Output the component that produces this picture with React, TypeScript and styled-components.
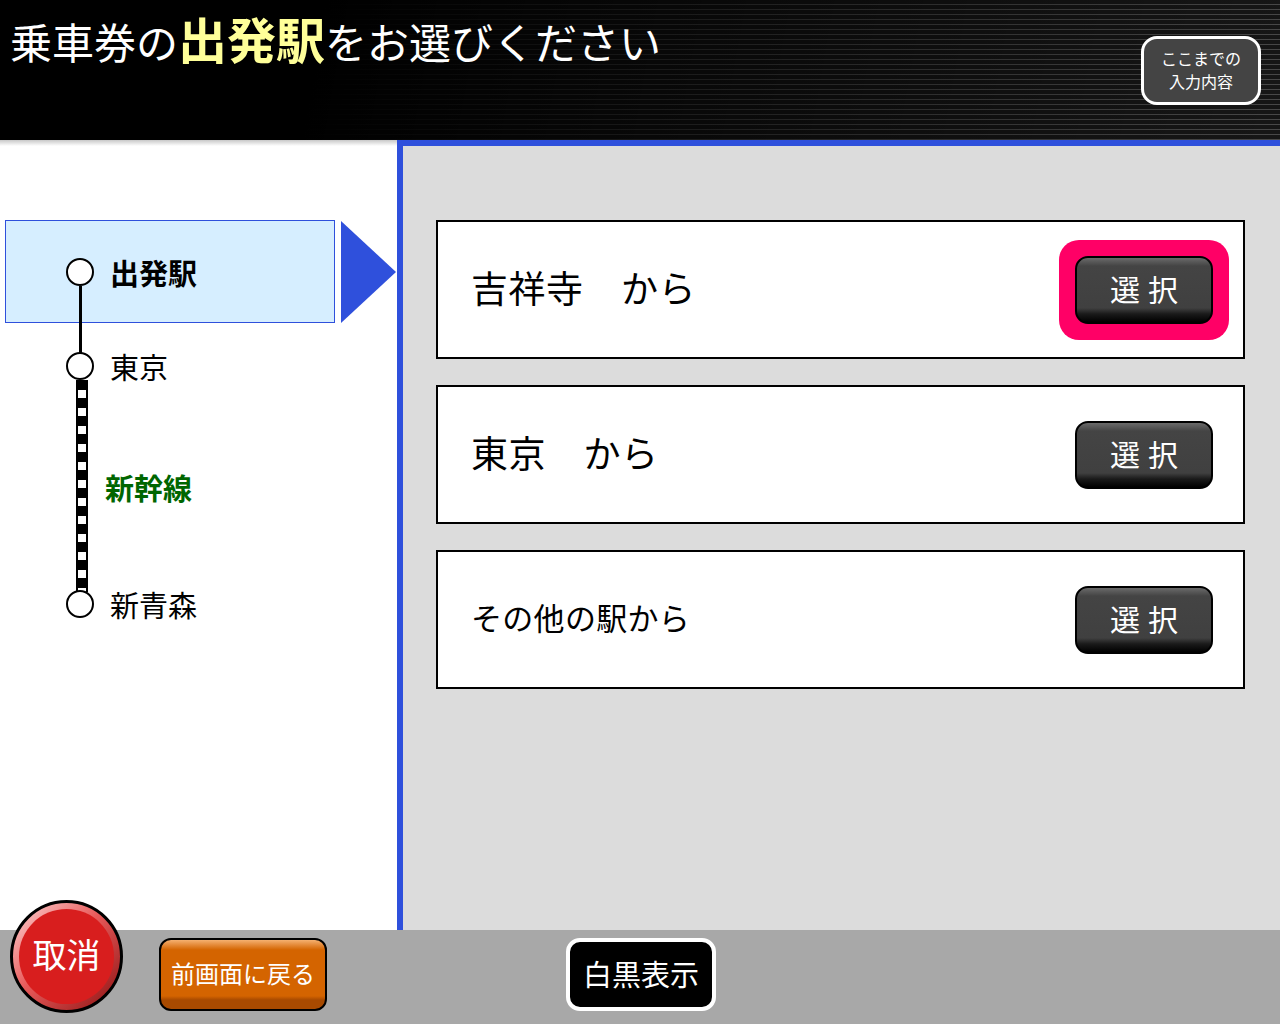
import styled, { createGlobalStyle } from "styled-components";

const GlobalStyle = createGlobalStyle`
  html, body {
    margin: 0;
    padding: 0;
    background: #000;
  }
  body {
    font-family: "Noto Sans CJK JP", "Noto Sans", sans-serif;
  }
  * {
    box-sizing: border-box;
  }
`;

const Screen = styled.div`
  width: 1280px;
  height: 1024px;
  display: flex;
  flex-direction: column;
  overflow: hidden;
`;

const Header = styled.header`
  height: 140px;
  display: flex;
  justify-content: space-between;
  align-items: flex-start;
  padding: 10px 19px 0 10px;
  background:
    linear-gradient(100deg, #000 25%, rgba(0, 0, 0, 0.15) 100%),
    repeating-linear-gradient(to bottom, #1a1a1a 0 4px, #555 4px 5px);
`;

const Title = styled.h1`
  margin: 0;
  font-size: 42px;
  font-weight: 400;
  line-height: 56px;
  color: #fff;
  white-space: nowrap;
`;

const Accent = styled.span`
  font-size: 49px;
  font-weight: 700;
  color: #ffff99;
`;

const HistoryButton = styled.button`
  margin-top: 26px;
  width: 120px;
  height: 69px;
  border: 3px solid #fff;
  border-radius: 16px;
  background: #444;
  color: #fff;
  font-family: inherit;
  font-size: 16px;
  line-height: 23px;
  padding: 0 0 2px;
`;

const Main = styled.main`
  flex: 1;
  display: flex;
  min-height: 0;
`;

const RoutePanel = styled.section`
  width: 397px;
  background: linear-gradient(to bottom, #c8c8c8 0, #fff 6px);
  padding-top: 80px;
  display: flex;
  flex-direction: column;
`;

const SelectedRow = styled.div`
  display: flex;
  align-items: flex-start;
`;

const Highlight = styled.div`
  margin-left: 5px;
  width: 330px;
  height: 103px;
  background: #d6eeff;
  border: 1px solid #2f50dc;
  display: flex;
  align-items: center;
  padding-left: 60px;
`;

const Arrow = styled.div`
  margin-left: 6px;
  margin-top: 1px;
  width: 0;
  height: 0;
  border-top: 51px solid transparent;
  border-bottom: 51px solid transparent;
  border-left: 55px solid #2f50dc;
`;

const Stop = styled.div<{ $gap?: number }>`
  display: flex;
  align-items: center;
  height: 28px;
  margin-top: ${(p) => p.$gap ?? 0}px;
  margin-left: ${(p) => (p.$gap === undefined ? 0 : 66)}px;
`;

const Dot = styled.span<{ $line?: "solid" | "dashed"; $len?: number }>`
  position: relative;
  width: 28px;
  height: 28px;
  border-radius: 50%;
  border: 2px solid #000;
  background: #fff;
  flex-shrink: 0;
  z-index: 1;

  &::after {
    content: "";
    display: ${(p) => (p.$line ? "block" : "none")};
    position: absolute;
    top: 26px;
    left: 50%;
    height: ${(p) => p.$len ?? 0}px;
    ${(p) =>
      p.$line === "dashed"
        ? `
      width: 8px;
      margin-left: -4px;
      border-left: 2px solid #000;
      border-right: 2px solid #000;
      background: repeating-linear-gradient(to bottom, #000 0 10px, #fff 10px 18px);
    `
        : `
      width: 3px;
      margin-left: -1.5px;
      background: #000;
    `}
  }
`;

const StopName = styled.span<{ $bold?: boolean }>`
  margin-left: 16px;
  font-size: 29px;
  font-weight: ${(p) => (p.$bold ? 700 : 400)};
  color: #000;
  line-height: 28px;
`;

const LineName = styled.div`
  margin-top: 92px;
  margin-left: 105px;
  height: 30px;
  font-size: 29px;
  font-weight: 700;
  line-height: 30px;
  color: #006600;
`;

const ChoicePanel = styled.section`
  flex: 1;
  background: #dcdcdc;
  border-left: 6px solid #2f50dc;
  border-top: 6px solid #2f50dc;
  padding: 74px 35px 0 33px;
  display: flex;
  flex-direction: column;
  gap: 26px;
`;

const Card = styled.div`
  height: 139px;
  background: #fff;
  border: 2px solid #000;
  display: flex;
  align-items: center;
  justify-content: space-between;
  padding: 0 14px 0 33px;
`;

const CardLabel = styled.span<{ $small?: boolean }>`
  font-size: ${(p) => (p.$small ? 31 : 37)}px;
  color: #000;
  white-space: pre;
  padding-bottom: 6px;
  letter-spacing: ${(p) => (p.$small ? 0.3 : 0.5)}px;
`;

const SelectWrap = styled.div<{ $active?: boolean }>`
  padding: 16px;
  border-radius: 20px;
  background: ${(p) => (p.$active ? "#ff0066" : "transparent")};
`;

const SelectButton = styled.button`
  display: block;
  width: 138px;
  height: 68px;
  border: 2px solid #000;
  border-radius: 13px;
  background: linear-gradient(
    to bottom,
    #6a6a6a 0,
    #444 8px,
    #404040 50px,
    #1a1a1a 56px,
    #000 100%
  );
  color: #fff;
  font-family: inherit;
  font-size: 30px;
  letter-spacing: 8px;
  padding: 0 0 4px 8px;
`;

const BottomBar = styled.footer`
  height: 94px;
  background: #a8a8a8;
  display: flex;
  align-items: flex-start;
  padding-left: 10px;
`;

const CancelButton = styled.button`
  margin-top: -30px;
  width: 113px;
  height: 113px;
  border-radius: 50%;
  border: 3px solid #000;
  padding: 6px;
  background: linear-gradient(135deg, #ffd6d6 0%, #e85a5a 45%, #8c1010 100%);
  display: flex;
  font-family: inherit;
`;

const CancelFace = styled.span`
  flex: 1;
  border-radius: 50%;
  background: #d81e1e;
  color: #fff;
  font-size: 34px;
  display: flex;
  align-items: center;
  justify-content: center;
  padding-bottom: 6px;
`;

const BackButton = styled.button`
  margin-top: 8px;
  margin-left: 36px;
  width: 168px;
  height: 73px;
  border: 2px solid #000;
  border-radius: 12px;
  background: linear-gradient(
    to bottom,
    #f5b070 0,
    #d46400 10px,
    #d46400 56px,
    #a84a00 60px,
    #a84a00 100%
  );
  color: #fff;
  font-family: inherit;
  font-size: 24px;
  padding: 0 0 4px;
  white-space: nowrap;
`;

const MonoButton = styled.button`
  margin-top: 8px;
  margin-left: 239px;
  width: 150px;
  height: 73px;
  border: 4px solid #fff;
  border-radius: 14px;
  background: #000;
  color: #fff;
  font-family: inherit;
  font-size: 29px;
  padding: 0 0 4px;
  white-space: nowrap;
`;

const choices = [
  { label: "吉祥寺　から", active: true },
  { label: "東京　から" },
  { label: "その他の駅から", small: true },
];

export default function App() {
  return (
    <Screen>
      <GlobalStyle />
      <Header>
        <Title>
          乗車券の<Accent>出発駅</Accent>をお選びください
        </Title>
        <HistoryButton>
          ここまでの
          <br />
          入力内容
        </HistoryButton>
      </Header>
      <Main>
        <RoutePanel>
          <SelectedRow>
            <Highlight>
              <Stop>
                <Dot $line="solid" $len={67} />
                <StopName $bold>出発駅</StopName>
              </Stop>
            </Highlight>
            <Arrow />
          </SelectedRow>
          <Stop $gap={29}>
            <Dot $line="dashed" $len={212} />
            <StopName>東京</StopName>
          </Stop>
          <LineName>新幹線</LineName>
          <Stop $gap={88}>
            <Dot />
            <StopName>新青森</StopName>
          </Stop>
        </RoutePanel>
        <ChoicePanel>
          {choices.map((c) => (
            <Card key={c.label}>
              <CardLabel $small={c.small}>{c.label}</CardLabel>
              <SelectWrap $active={c.active}>
                <SelectButton>選択</SelectButton>
              </SelectWrap>
            </Card>
          ))}
        </ChoicePanel>
      </Main>
      <BottomBar>
        <CancelButton>
          <CancelFace>取消</CancelFace>
        </CancelButton>
        <BackButton>前画面に戻る</BackButton>
        <MonoButton>白黒表示</MonoButton>
      </BottomBar>
    </Screen>
  );
}
